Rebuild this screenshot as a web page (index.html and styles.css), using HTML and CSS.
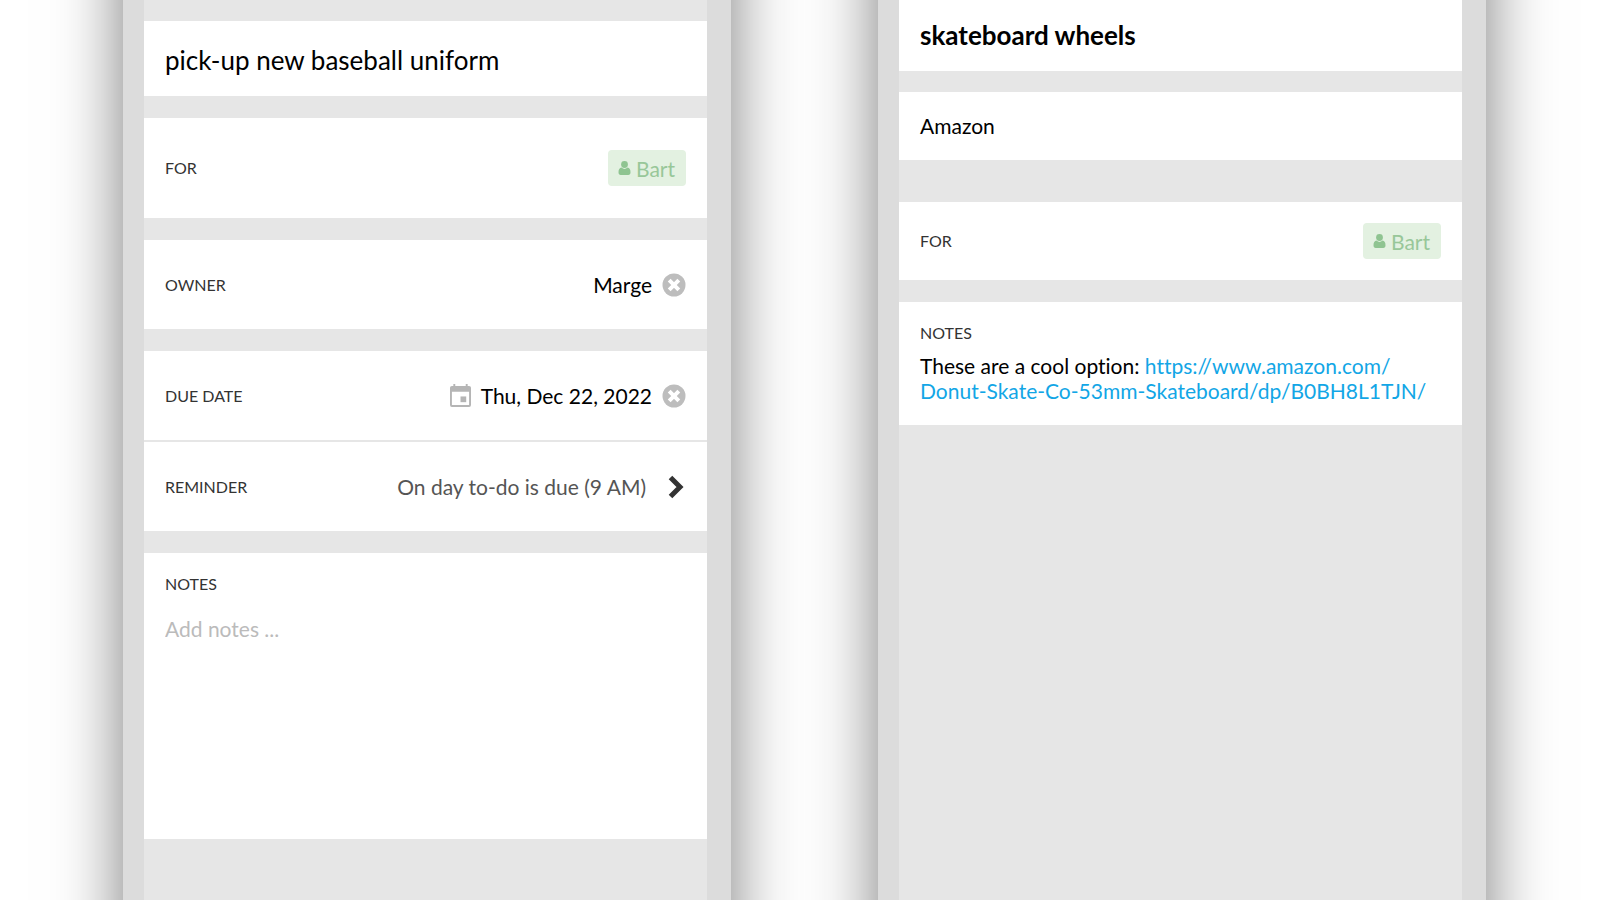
FILE: index.html
```html
<!DOCTYPE html>
<html lang="en">
<head>
  <meta charset="utf-8">
  <meta name="viewport" content="width=device-width,initial-scale=1">
  <title>To-do and shopping item details</title>
  <link rel="stylesheet" href="styles.css">
</head>
<body>

<!-- shared icons -->
<svg class="sprite" aria-hidden="true">
  <symbol id="icon-user" viewBox="0 0 12 14">
    <circle cx="6" cy="3.5" r="3.4"/>
    <path d="M3 6.600C1 6.800 0 8.600 0 11.200 0 13 .8 14 2.200 14h7.600c1.400 0 2.200-1 2.200-2.800C12 8.600 11 6.800 9 6.600a4.300 4.300 0 0 1-6 0z"/>
  </symbol>
  <symbol id="icon-clear" viewBox="0 0 24 24">
    <circle cx="12" cy="12" r="11.500"/>
    <path d="M7.200 7.200l9.600 9.600M16.800 7.200l-9.600 9.600" stroke="#fff" stroke-width="4"/>
  </symbol>
  <symbol id="icon-calendar" viewBox="0 0 22 24">
    <path fill-rule="evenodd" d="M3.500 0h2v2h11V0h2v2H20a2 2 0 0 1 2 2v18a2 2 0 0 1-2 2H2a2 2 0 0 1-2-2V4a2 2 0 0 1 2-2h1.500zM2 8v14h18V8z"/>
    <path d="M11 13h6v6h-6z"/>
  </symbol>
  <symbol id="icon-chevron" viewBox="0 0 16 24">
    <path d="M2.500 2.500L12 12l-9.500 9.500" fill="none" stroke="currentColor" stroke-width="5"/>
  </symbol>
</svg>

<main class="stage">

  <form class="phone phone-todo">
    <section class="card title-card">
      <input class="title" type="text" value="pick-up new baseball uniform" aria-label="To-do">
    </section>

    <section class="card row row-tall">
      <span class="label">FOR</span>
      <span class="tag"><svg class="icon-user"><use href="#icon-user"/></svg>Bart</span>
    </section>

    <section class="card row">
      <span class="label">OWNER</span>
      <span class="value">Marge
        <button class="clear" type="button" aria-label="Remove owner"><svg><use href="#icon-clear"/></svg></button>
      </span>
    </section>

    <section class="card">
      <div class="row">
        <span class="label">DUE DATE</span>
        <span class="value">
          <button class="date" type="button"><svg class="icon-calendar"><use href="#icon-calendar"/></svg>Thu, Dec 22, 2022</button>
          <button class="clear" type="button" aria-label="Remove due date"><svg><use href="#icon-clear"/></svg></button>
        </span>
      </div>
      <div class="row row-line">
        <span class="label">REMINDER</span>
        <button class="reminder" type="button">On day to-do is due (9 AM)<svg class="icon-chevron"><use href="#icon-chevron"/></svg></button>
      </div>
    </section>

    <section class="card notes-card">
      <label class="label" for="notes">NOTES</label>
      <textarea id="notes" class="notes" placeholder="Add notes ..."></textarea>
    </section>
  </form>

  <article class="phone phone-item">
    <section class="card title-card">
      <h1 class="title">skateboard wheels</h1>
    </section>

    <section class="card store">Amazon</section>

    <section class="card row row-short">
      <span class="label">FOR</span>
      <span class="tag"><svg class="icon-user"><use href="#icon-user"/></svg>Bart</span>
    </section>

    <section class="card item-notes">
      <h2 class="label">NOTES</h2>
      <p>These are a cool option: <a href="https://www.amazon.com/Donut-Skate-Co-53mm-Skateboard/dp/B0BH8L1TJN/">https://www.amazon.com/<wbr>Donut-Skate-Co-53mm-Skateboard/dp/B0BH8L1TJN/</a></p>
    </section>
  </article>

</main>
</body>
</html>
```
FILE: styles.css
```css
*{box-sizing:border-box}
body{margin:0;background:#fff;color:#000;font:21px/25px Lato,sans-serif;
     font-variant-ligatures:none}
h1,h2,p{margin:0}
button,input,textarea{padding:0;border:0;background:none;color:inherit;font:inherit}
button{cursor:pointer}
.sprite{position:absolute;width:0;height:0}

.stage{display:grid;grid-template-columns:1fr 1fr;gap:147px;height:100vh;
       padding:0 113px 0 123px;overflow:hidden}

/* the frames run past both window edges, so the side shadows stay even */
.phone{display:flex;flex-direction:column;gap:22px;margin:-80px 0;padding:80px 0;
       background:#e6e6e6;border:solid #dcdcdc;border-width:0 24px 0 21px;
       box-shadow:0 0 64px rgba(0,0,0,.52)}
.phone-todo{padding-top:101px}

.card{background:#fff}
.title-card{display:flex;align-items:center;height:75px;padding:2px 21px 0}
.title{width:100%;font-size:26px;line-height:32px}
.label{color:#333;font-size:16px;line-height:20px;font-weight:400}

.row{display:flex;align-items:center;justify-content:space-between;height:89px;padding:0 21px}
.row-tall{height:100px}
.row-short{height:78px}
.row-line{height:91px;border-top:2px solid #e6e6e6}
.value{display:flex;align-items:center;gap:10px}

.tag{display:flex;align-items:center;gap:5px;height:36px;padding:0 11px 0 10px;
     border-radius:4px;background:#e3f1e1;color:#98c799}
.icon-user{width:13px;height:14px;fill:#8fc491}
.clear,.clear svg{display:block;width:24px;height:24px;fill:#bdbdbd}
.date{display:flex;align-items:center;gap:10px}
.icon-calendar{width:21px;height:23px;fill:#b5b5b5}
.reminder{display:flex;align-items:center;gap:22px;padding-right:2px;color:#555}
.icon-chevron{width:16px;height:24px;color:#333}

.notes-card{display:flex;flex-direction:column;gap:22px;height:286px;padding:21px}
.notes{flex:1;resize:none;outline:0}
.notes::placeholder{color:#bbb}

/* shopping item */
.phone-item{gap:21px}
.phone-item .title-card{height:71px;padding:0 21px 2px}
.store{height:68px;padding:21px;margin-bottom:21px}
.phone-item .row-short{margin-bottom:1px}
.item-notes{padding:21px 21px 22px}
.item-notes .label{margin-bottom:10px}
.item-notes a{color:#12a6e6;text-decoration:none}
```
